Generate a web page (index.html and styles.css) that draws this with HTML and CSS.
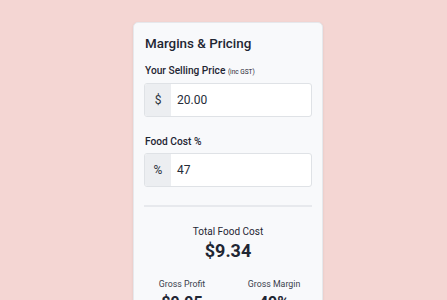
FILE: index.html
```html
<!DOCTYPE html>
<html lang="en">
<head>
    <meta charset="UTF-8">
    <meta name="viewport" content="width=device-width, initial-scale=1.0">
    <title>Margins &amp; Pricing</title>
    <link rel="stylesheet" href="styles.css">
</head>
<body>

    <section class="main">
        <div class="card">
            <h2 class="title">Margins &amp; Pricing</h2>

            <div class="field">
                <label class="label">Your Selling Price <small>(inc GST)</small></label>
                <div class="input">
                    <span class="addon">$</span>
                    <span class="value">20.00</span>
                </div>
            </div>

            <div class="field">
                <label class="label">Food Cost %</label>
                <div class="input">
                    <span class="addon">%</span>
                    <span class="value">47</span>
                </div>
            </div>

            <div class="results">
                <p class="result-label">Total Food Cost</p>
                <p class="result-big">$9.34</p>

                <div class="split">
                    <div class="col">
                        <p class="col-label">Gross Profit</p>
                        <p class="col-value">$9.95</p>
                    </div>
                    <div class="col">
                        <p class="col-label">Gross Margin</p>
                        <p class="col-value">49%</p>
                    </div>
                </div>
            </div>
        </div>
    </section>

</body>
</html>
```

FILE: styles.css
```css
* {
    margin: 0;
    padding: 0;
    box-sizing: border-box;
    font-family: Roboto, "Noto Sans", sans-serif;
}

body {
    background-color: #f4d6d3;
    color: #1f2633;
    overflow: hidden;
}

section.main {
    display: flex;
    justify-content: center;
    padding: 22px 0 0 9px;
}

section.main .card {
    width: 190px;
    background-color: #f8f9fb;
    border: 1px solid #e6e8ec;
    border-radius: 5px;
    padding: 10px 10px 20px;
    box-shadow: 0 1px 3px rgba(0, 0, 0, .08);
}

section.main .title {
    font-size: 13.4px;
    font-weight: 500;
    line-height: 20px;
    margin: 1px 0 0 1px;
}

section.main .field {
    margin-top: 10px;
}

section.main .field + .field {
    margin-top: 18px;
}

section.main .label {
    display: block;
    font-size: 10.2px;
    font-weight: 500;
    line-height: 14px;
    margin: 0 0 4px 1px;
}

section.main .label small {
    font-size: 6.5px;
    font-weight: 400;
}

section.main .input {
    display: flex;
    height: 34px;
    border: 1px solid #dfe2e6;
    border-radius: 3px;
    background-color: #fff;
    overflow: hidden;
}

section.main .input .addon {
    width: 26px;
    display: flex;
    align-items: center;
    justify-content: center;
    background-color: #eceef1;
    font-size: 12px;
    color: #2b3340;
}

section.main .input .value {
    display: flex;
    align-items: center;
    padding-left: 6px;
    font-size: 12px;
    color: #252c38;
}

section.main .results {
    margin-top: 18px;
    border-top: 2px solid #e7e9ed;
    padding-top: 18px;
    text-align: center;
}

section.main .result-label {
    font-size: 10px;
    line-height: 14px;
}

section.main .result-big {
    font-size: 18px;
    font-weight: 700;
    line-height: 24px;
}

section.main .split {
    display: grid;
    grid-template-columns: 1fr 1fr;
    column-gap: 16px;
    margin-top: 15px;
}

section.main .col-label {
    font-size: 8.8px;
    line-height: 12px;
    color: #3a414d;
}

section.main .col-value {
    font-size: 16px;
    font-weight: 700;
    line-height: 22px;
    margin-top: 2px;
}
```
